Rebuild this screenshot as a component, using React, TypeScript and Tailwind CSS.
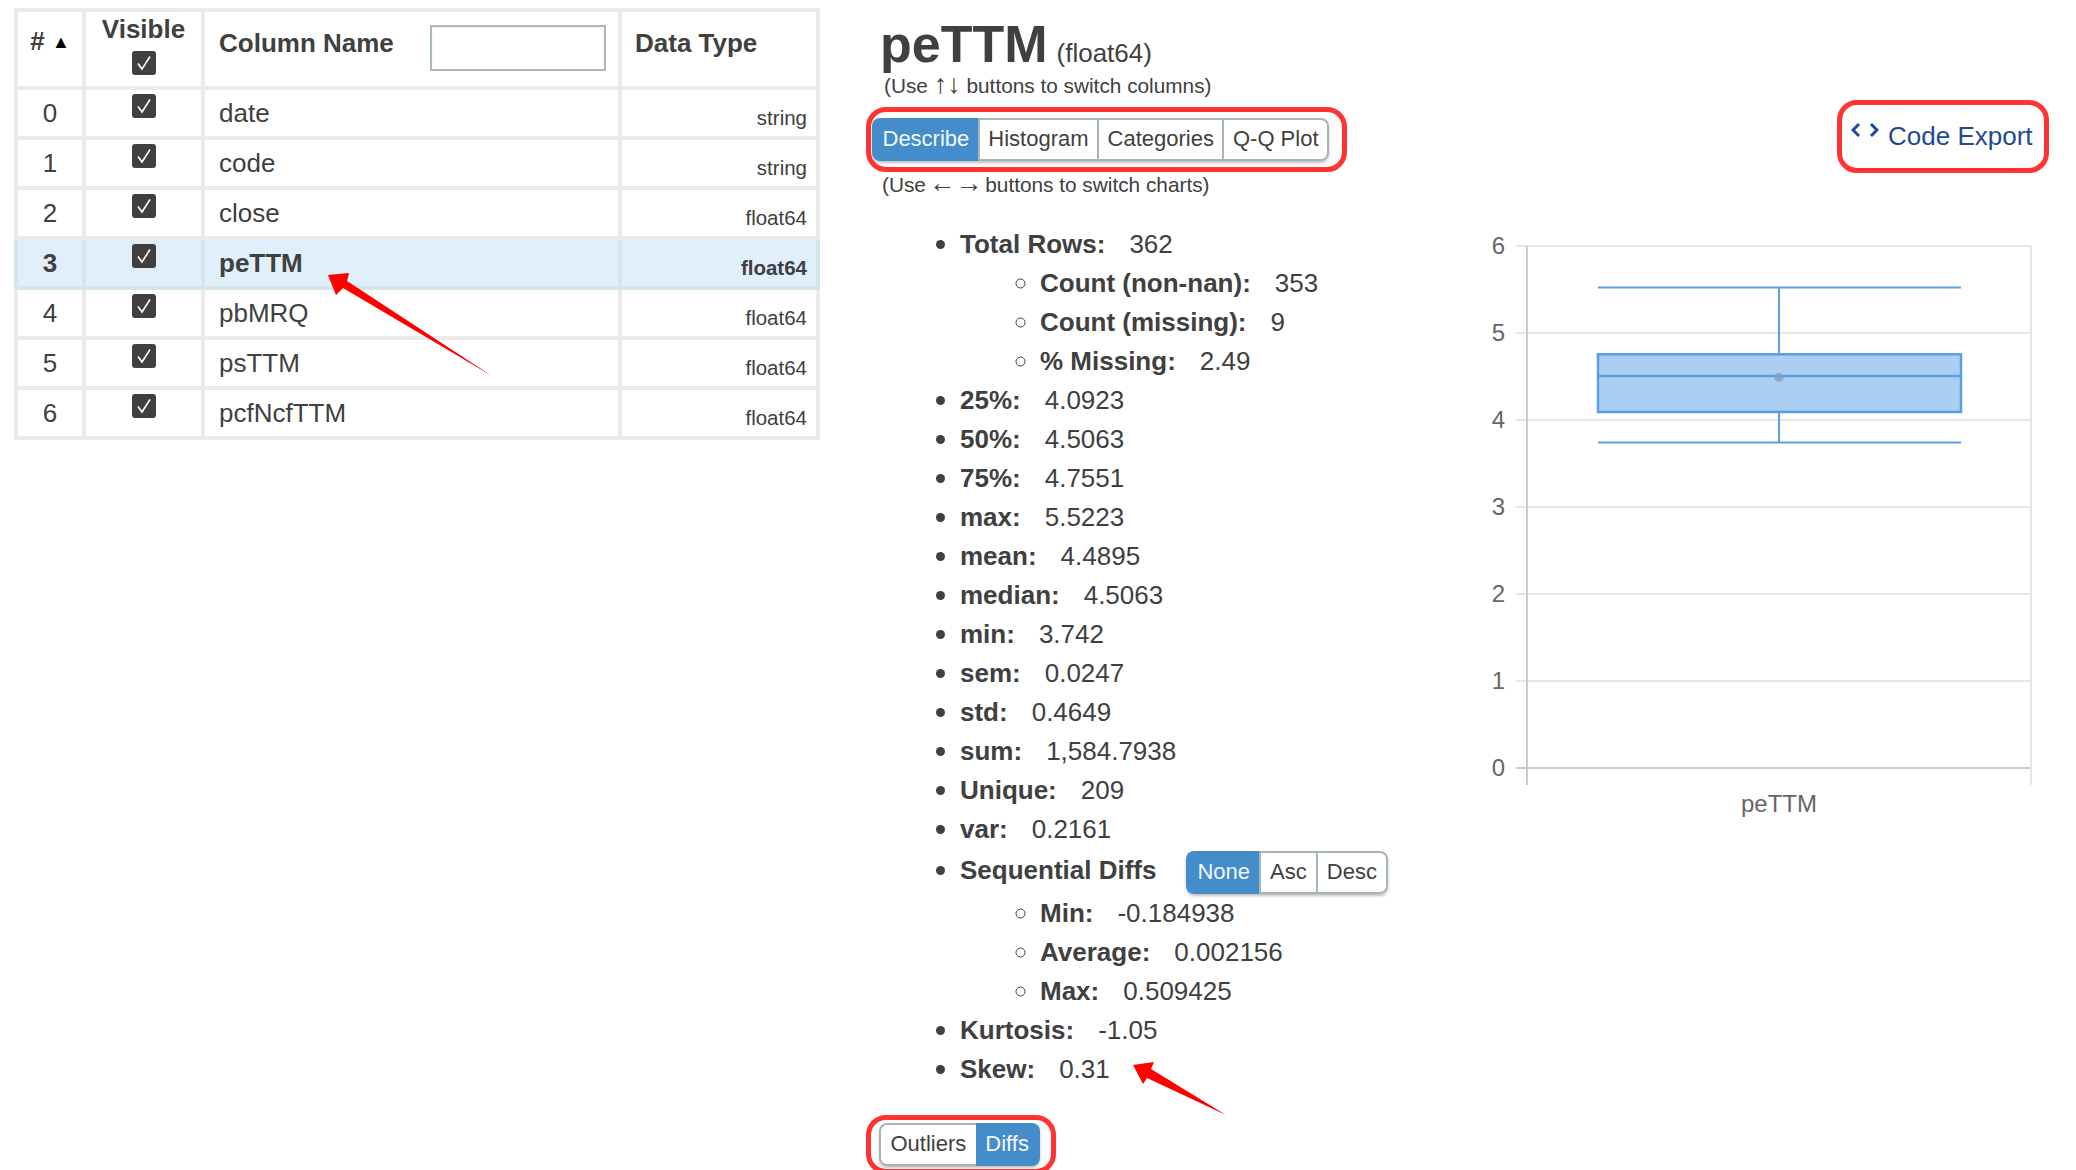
import React from "react";

const rows = [
  { id: 0, name: "date", type: "string" },
  { id: 1, name: "code", type: "string" },
  { id: 2, name: "close", type: "float64" },
  { id: 3, name: "peTTM", type: "float64", selected: true },
  { id: 4, name: "pbMRQ", type: "float64" },
  { id: 5, name: "psTTM", type: "float64" },
  { id: 6, name: "pcfNcfTTM", type: "float64" },
];

function CheckBox() {
  return (
    <svg width="24" height="24" viewBox="0 0 24 24" className="block mx-auto">
      <rect x="0" y="0" width="24" height="24" rx="3" fill="#404040" />
      <path d="M6 12.5 L10 18 L18 5.5" fill="none" stroke="#fff" strokeWidth="1.6" />
    </svg>
  );
}

function ButtonGroup({ items, active, pad = "px-[8.5px]" }: { items: string[]; active: string; pad?: string }) {
  return (
    <div className="inline-flex h-[43px] align-middle rounded-[8px] shadow-[0_2px_3px_rgba(0,0,0,0.25)] text-[22px] leading-[38px] font-normal">
      {items.map((item, i) => (
        <div
          key={item}
          className={
            pad + " border-y-[2px] " +
            (item === active
              ? "bg-[#458ccb] border-[#458ccb] text-[#f2f7fc] "
              : "bg-white border-[#a7b4b8] text-[#404040] ") +
            (i === 0 ? "rounded-l-[8px] border-l-[2px] " : "") +
            (i === items.length - 1 ? "rounded-r-[8px] border-r-[2px] " : "") +
            (i > 0 && item !== active ? "border-l-[2px] " : "")
          }
        >
          {item}
        </div>
      ))}
    </div>
  );
}

function Stat({ label, value, sub }: { label: string; value: string; sub?: boolean }) {
  return (
    <li className={sub ? "list-[circle] h-[39px] marker:text-[29px]" : "list-disc h-[39px] marker:text-[29px]"}>
      <b>{label}</b>
      <span className="ml-[24px]">{value}</span>
    </li>
  );
}

function BoxPlot() {
  const y = (v: number) => 548 - 87 * v;
  const left = 91;
  const right = 595;
  return (
    <svg width="640" height="620" viewBox="0 0 640 620" className="block">
      {[0, 1, 2, 3, 4, 5, 6].map((v) => (
        <g key={v}>
          <line x1={80} x2={right} y1={y(v)} y2={y(v)} stroke={v === 0 ? "#cccccc" : "#e6e6e6"} strokeWidth="2" />
          <text x={69} y={y(v) + 8} textAnchor="end" fontSize="24" fill="#666666">{v}</text>
        </g>
      ))}
      <line x1={left} x2={left} y1={y(6)} y2={565} stroke="#cccccc" strokeWidth="2" />
      <line x1={right} x2={right} y1={y(6)} y2={565} stroke="#e6e6e6" strokeWidth="2" />
      <g stroke="#5a9fe0" strokeWidth="2">
        <line x1={162} x2={525} y1={y(5.5223)} y2={y(5.5223)} />
        <line x1={162} x2={525} y1={y(3.742)} y2={y(3.742)} />
        <line x1={343} x2={343} y1={y(5.5223)} y2={y(4.7551)} />
        <line x1={343} x2={343} y1={y(4.0923)} y2={y(3.742)} />
        <rect x={162} y={y(4.7551)} width={363} height={y(4.0923) - y(4.7551)} fill="#abcef2" strokeWidth="2.5" />
        <line x1={162} x2={525} y1={y(4.5063)} y2={y(4.5063)} strokeWidth="2.5" />
      </g>
      <circle cx={343} cy={y(4.4895)} r={4.5} fill="#7f9cbc" fillOpacity="0.75" />
      <text x={343} y={592} textAnchor="middle" fontSize="24" fill="#666666">peTTM</text>
    </svg>
  );
}

export default function App() {
  return (
    <div className="relative flex items-start w-[2076px] h-[1170px] overflow-hidden bg-white text-[#404040] font-['Liberation_Sans',Arial,sans-serif]">
      {/* Column table */}
      <table className="ml-[14px] mt-[8px] w-[802px] table-fixed border-collapse text-[26px] shrink-0">
        <colgroup>
          <col className="w-[68px]" />
          <col className="w-[119px]" />
          <col className="w-[417px]" />
          <col className="w-[198px]" />
        </colgroup>
        <thead>
          <tr className="h-[78px]">
            <th className="border-[4px] border-[#ebebeb] font-bold align-top pt-[6px] leading-[46px]">
              # <span className="text-[18px] align-[2px] text-black">▲</span>
            </th>
            <th className="border-[4px] border-[#ebebeb] font-bold leading-[29px] align-top pt-[3px]">
              Visible
              <div className="mt-[7px]"><CheckBox /></div>
            </th>
            <th className="border-[4px] border-[#ebebeb] font-bold text-left pl-[14px] align-top pt-[13px]">
              <div className="flex items-start justify-between pr-[12px]">
                <span className="-mt-[5px] leading-[46px]">Column Name</span>
                <div className="w-[176px] h-[46px] border-[2px] border-[#a9b9bd] bg-white shadow-[inset_0_1px_2px_rgba(0,0,0,0.08)]" />
              </div>
            </th>
            <th className="border-[4px] border-[#ebebeb] font-bold text-left pl-[13px] align-top pt-[8px] leading-[46px]">Data Type</th>
          </tr>
        </thead>
        <tbody>
          {rows.map((r) => {
            const cell = "border-[4px] " + (r.selected ? "border-[#d6e4ec] " : "border-[#ebebeb] ");
            return (
              <tr key={r.id} className={"h-[50px] " + (r.selected ? "bg-[#e1effb] font-bold" : "")}>
                <td className={cell + "text-center"}>{r.id}</td>
                <td className={cell + "align-top pt-[4px]"}><CheckBox /></td>
                <td className={cell + "pl-[14px]"}>{r.name}</td>
                <td className={cell + "text-right pr-[9px] text-[20.5px] pt-[10px]"}>{r.type}</td>
              </tr>
            );
          })}
        </tbody>
      </table>

      {/* Column details */}
      <div className="ml-[46px] w-[570px] shrink-0 pt-[20px]">
        <div className="pl-[14px] leading-[48px]">
          <span className="text-[52px] font-bold">peTTM</span>
          <span className="ml-[9px] text-[26px]">(float64)</span>
        </div>
        <div className="pl-[18px] h-[24px] text-[20.8px] leading-[24px] -mt-[10px]">
          (Use <span className="text-[27px] leading-none">↑</span><span className="text-[27px] leading-none">↓</span> buttons to switch columns)
        </div>
        <div className="mt-[12px] inline-flex border-[5px] border-[#ff3333] rounded-[20px] pl-[1px] pr-[13px] py-[6px]">
          <ButtonGroup items={["Describe", "Histogram", "Categories", "Q-Q Plot"]} active="Describe" />
        </div>
        <div className="pl-[16px] h-[24px] text-[20.8px] leading-[24px] -mt-[2px]">
          (Use <span className="text-[27px] leading-none -mx-[3px]">←</span> <span className="text-[27px] leading-none -mx-[3px]">→</span> buttons to switch charts)
        </div>

        <ul className="mt-[30px] ml-[94px] text-[26px] leading-[39px]">
          <Stat label="Total Rows:" value="362" />
          <ul className="ml-[80px]">
            <Stat sub label="Count (non-nan):" value="353" />
            <Stat sub label="Count (missing):" value="9" />
            <Stat sub label="% Missing:" value="2.49" />
          </ul>
          <Stat label="25%:" value="4.0923" />
          <Stat label="50%:" value="4.5063" />
          <Stat label="75%:" value="4.7551" />
          <Stat label="max:" value="5.5223" />
          <Stat label="mean:" value="4.4895" />
          <Stat label="median:" value="4.5063" />
          <Stat label="min:" value="3.742" />
          <Stat label="sem:" value="0.0247" />
          <Stat label="std:" value="0.4649" />
          <Stat label="sum:" value="1,584.7938" />
          <Stat label="Unique:" value="209" />
          <Stat label="var:" value="0.2161" />
          <li className="list-disc h-[46px] leading-[45px] -mt-[1px] marker:text-[29px]">
            <b>Sequential Diffs</b>
            <span className="ml-[30px]"><ButtonGroup items={["None", "Asc", "Desc"]} active="None" pad="px-[9px]" /></span>
          </li>
          <ul className="ml-[80px]">
            <Stat sub label="Min:" value="-0.184938" />
            <Stat sub label="Average:" value="0.002156" />
            <Stat sub label="Max:" value="0.509425" />
          </ul>
          <Stat label="Kurtosis:" value="-1.05" />
          <Stat label="Skew:" value="0.31" />
        </ul>

        <div className="mt-[27px] inline-flex border-[5px] border-[#ff3333] rounded-[20px] pl-[8px] pr-[11px] py-[3px]">
          <ButtonGroup items={["Outliers", "Diffs"]} active="Diffs" pad="px-[9.5px]" />
        </div>
      </div>

      {/* Code export and chart */}
      <div className="flex-1 flex flex-col">
        <div className="self-end mr-[27px] mt-[100px] w-[212px] h-[73px] border-[5px] border-[#ff3333] rounded-[20px] flex items-center pl-[9px] text-[26px] text-[#1f4a8f]">
          <svg width="28" height="20" viewBox="0 0 28 20" className="-mt-[12px] shrink-0" fill="none" stroke="#1f4a8f" strokeWidth="3">
            <path d="M8 3 L2 9 L8 15" />
            <path d="M20 3 L26 9 L20 15" />
          </svg>
          <span className="ml-[9px]">Code Export</span>
        </div>
        <div className="mt-[47px]">
          <BoxPlot />
        </div>
      </div>

      {/* Annotation arrows */}
      <svg className="absolute left-0 top-0 pointer-events-none" width="2076" height="1170" fill="#ff0000">
        <path d="M328 275 L349 273 L347 281 L492 376 L343 288 L336 295 Z" />
        <path d="M1133 1065 L1154 1062 L1151 1069 L1226 1115 L1147 1078 L1143 1084 Z" />
      </svg>
    </div>
  );
}
